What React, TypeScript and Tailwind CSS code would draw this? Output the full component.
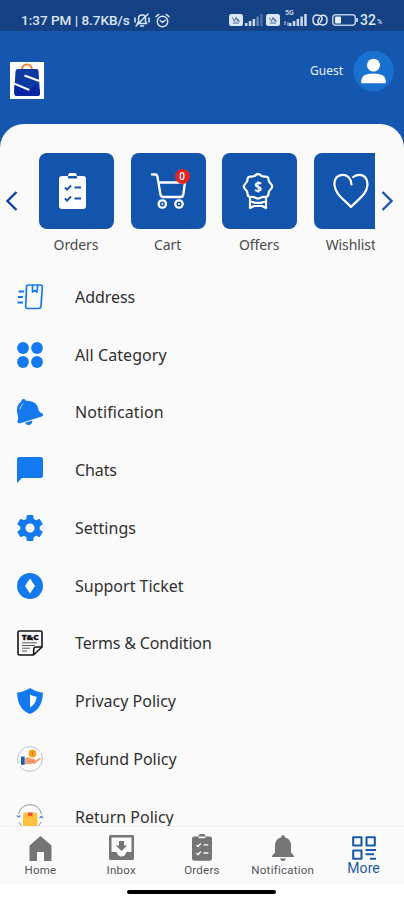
import React from 'react';

const BLUE = '#1479ee';

function Clipboard({ body, mark, className }: { body: string; mark: string; className: string }) {
  return (
    <svg viewBox="0 0 27 36" className={className}>
      <path d="M3 3h6a4.500 4 0 0 1 9 0h6a3 3 0 0 1 3 3v27a3 3 0 0 1-3 3H3a3 3 0 0 1-3-3V6a3 3 0 0 1 3-3Z" fill={body} />
      <path d="M10 4.200h7" stroke={mark} strokeWidth="2.400" strokeLinecap="round" />
      <path d="m6 14.500 2 2.200 4-4.200M6 25.500l2 2.200 4-4.200M15.500 14.500H22M15.500 25.500H22" fill="none" stroke={mark} strokeWidth="1.900" />
    </svg>
  );
}

function CartIcon() {
  return (
    <svg viewBox="0 0 40 40" className="h-10 w-10" fill="none" stroke="#fff" strokeWidth="2.300" strokeLinecap="round" strokeLinejoin="round">
      <path d="M2 3.500h3.500q1.500 0 1.800 1.500l3.200 18.500q.4 2.500 3 2.500h17q2.500 0 2.800-2.500L35 11M8.500 11.500H35" />
      <circle cx="12.300" cy="33" r="3.700" />
      <circle cx="29" cy="33" r="3.700" />
      <path d="M12.300 33h.01M29 33h.01" strokeWidth="2" />
    </svg>
  );
}

function OfferIcon() {
  return (
    <svg viewBox="0 0 32 38" className="h-[38px] w-8" fill="none" stroke="#fff" strokeWidth="2.200" strokeLinejoin="round">
      <path d="M8 4.500Q12 5 13.500 3.200 16 1 18.500 3.200 20 5 24 4.500q2.500.3 2.500 3 0 2.500 2.200 4.200 3 2.800 0 5.600-2.200 1.700-2.200 4.400 0 3.300-3.500 3.300-2.500-.3-4.500.7-2.500 1.400-5 0-2-1-4.500-.7-3.500 0-3.500-3.300 0-2.700-2.200-4.400-3-2.800 0-5.600Q5.500 10 5.500 7.500q0-2.700 2.500-3Z" />
      <path d="M8 25.500V36l4-2h8l4 2V25.500M8 28.800l4.500 2h7l4.500-2" />
      <text x="16" y="19.500" fontSize="13.500" fontWeight="700" textAnchor="middle" fill="#fff" stroke="none" fontFamily="Noto Sans, sans-serif">$</text>
    </svg>
  );
}

function HeartIcon() {
  return (
    <svg viewBox="0 0 36 35" className="h-[35px] w-9" fill="none" stroke="#fff" strokeWidth="2.200" strokeLinejoin="round" strokeLinecap="round">
      <path d="M18.500 11.500C18.500 6 14.500 1.500 9.500 1.800 4 2 1 6 1.500 12c.7 9 9 14 16.500 22C25.500 26 34 21 34.500 12 34.800 6 31.500 2 27 1.800c-3-.1-5 .8-6.800 2.200" />
    </svg>
  );
}

function Tile({ label, children }: { label: string; children: React.ReactNode }) {
  return (
    <div className="flex w-[75px] shrink-0 flex-col items-center">
      <div className="flex h-[75.500px] w-full items-center justify-center rounded-[8px] bg-[#1355ad]">{children}</div>
      <div className="mt-[6px] whitespace-nowrap pr-px font-['Noto_Sans',sans-serif] text-[14px] leading-5 tracking-[-0.1px] text-[#4b4b4b]">{label}</div>
    </div>
  );
}

const rows: { label: string; spacing: string; icon: React.ReactNode }[] = [
  {
    label: 'Address',
    spacing: 'tracking-[-0.05px]',
    icon: (
      <g fill="none" stroke={BLUE} strokeWidth="1.700" strokeLinejoin="round">
        <path d="M11 1h12.500q2 0 1.800 2l-1.300 19q-.2 2.500-2.500 2.500H10.500q-2 0-1.800-2L9.500 3q.1-2 1.500-2ZM15.500 1v7l2.500-1.500L20 8l.7-7" />
        <path d="M1.500 7.500H7M1 13h5M.5 18.500H6" strokeWidth="2" />
      </g>
    ),
  },
  {
    label: 'All Category',
    spacing: 'tracking-[0.08px]',
    icon: (
      <g fill={BLUE}>
        <circle cx="6" cy="6" r="5.900" />
        <circle cx="20" cy="6" r="5.900" />
        <circle cx="6" cy="20" r="5.900" />
        <circle cx="20" cy="20" r="5.900" />
      </g>
    ),
  },
  {
    label: 'Notification',
    spacing: 'tracking-[0.1px]',
    icon: (
      <g>
        <path d="M4.200 2.800C4-.8 8.200-.8 8.800 1.800 16 1.200 21 5 21.500 10.800c.2 2 2.300 2.800 4 4 1.200 1 .8 2.400-.6 2.800L3.200 24.200C1 24.800 0 23.500.6 21.800c.8-2.300.6-4 0-6.300C-.8 10 .2 5.500 4.200 2.800Z" fill={BLUE} />
        <path d="m8 23.800 7.500-2.300q-.8 4.700-4.300 4.500Q9 26 8 23.800Z" fill={BLUE} />
        <path d="M3 10Q3.300 6.500 6 5" stroke="#b9dafc" strokeWidth="1" fill="none" strokeLinecap="round" />
      </g>
    ),
  },
  {
    label: 'Chats',
    spacing: 'tracking-[-0.1px]',
    icon: <path d="M2.500 0h21Q26 0 26 2.500v16q0 2.500-2.500 2.500H5l-5 5V2.500Q0 0 2.500 0Z" fill={BLUE} />,
  },
  {
    label: 'Settings',
    spacing: 'tracking-[0px]',
    icon: (
      <path
        fill={BLUE}
        transform="translate(-2.6 -2.6) scale(1.3)"
        d="M19.430 12.980c.04-.32.07-.64.07-.98s-.03-.66-.07-.98l2.110-1.650c.19-.15.24-.42.12-.64l-2-3.460c-.12-.22-.39-.3-.61-.22l-2.490 1c-.52-.4-1.080-.73-1.690-.98l-.38-2.650C14.460 2.180 14.250 2 14 2h-4c-.25 0-.46.18-.49.42l-.38 2.650c-.61.25-1.170.59-1.690.98l-2.490-1c-.23-.09-.49 0-.61.22l-2 3.460c-.13.22-.07.49.12.64l2.110 1.650c-.04.32-.07.65-.07.98s.03.66.07.98l-2.110 1.650c-.19.15-.24.42-.12.64l2 3.460c.12.22.39.3.61.22l2.490-1c.52.4 1.080.73 1.690.98l.38 2.650c.03.24.24.42.49.42h4c.25 0 .46-.18.49-.42l.38-2.650c.61-.25 1.170-.59 1.690-.98l2.490 1c.23.09.49 0 .61-.22l2-3.460c.12-.22.07-.49-.12-.64l-2.110-1.650zM12 15.500c-1.930 0-3.500-1.570-3.500-3.500s1.570-3.500 3.500-3.500 3.500 1.570 3.500 3.500-1.570 3.500-3.500 3.500z"
      />
    ),
  },
  {
    label: 'Support Ticket',
    spacing: 'tracking-[0px]',
    icon: (
      <g>
        <circle cx="13" cy="13" r="13" fill={BLUE} />
        <path d="m13 5.500 5 7.500-5 7.500L8 13Z" fill="#fff" />
      </g>
    ),
  },
  {
    label: 'Terms & Condition',
    spacing: 'tracking-[-0.15px]',
    icon: (
      <g fill="none" stroke="#171717" strokeWidth="1.600" strokeLinejoin="round">
        <path d="M2.500 1h21q1.500 0 1.500 1.500V17l-8.500 8h-14Q1 25 1 23.500v-21Q1 1 2.500 1ZM25 17h-6q-2 0-2.200 2l-.3 6" />
        <path d="M5 12.800h15M5 15.500h13M5 18.200h8M5 21h5" strokeWidth="1" stroke="#555" />
        <text x="13.200" y="10" fontSize="7.600" fontWeight="900" textAnchor="middle" fill="#111" stroke="#111" strokeWidth=".3" fontFamily="Noto Sans, sans-serif" textLength="17" lengthAdjust="spacingAndGlyphs">T&amp;C</text>
      </g>
    ),
  },
  {
    label: 'Privacy Policy',
    spacing: 'tracking-[0px]',
    icon: (
      <g>
        <path d="M13 0q5 3.500 13 4.700C25.500 16 21 23 13 26 5 23 .5 16 0 4.700 8 3.500 13 0 13 0Z" fill={BLUE} />
        <path d="M13 6.500q3 1.800 6.700 2.300Q19 16 13 19.500Z" fill="#fff" />
      </g>
    ),
  },
  {
    label: 'Refund Policy',
    spacing: 'tracking-[0px]',
    icon: (
      <g>
        <circle cx="13" cy="13" r="12.300" fill="#fff" stroke="#b8c2cd" strokeWidth="1" strokeDasharray="31 3 35 2" />
        <circle cx="15.500" cy="7.500" r="3.900" fill="#f7a51d" />
        <path d="M15.500 5.500v4" stroke="#d57b0e" strokeWidth="1.200" />
        <path d="M8 12.500q3-2.500 6 0l3 .3q1.500.7.500 2l5-2.800q2-.4 1.200 1.300L18 17.800l-10 .4Z" fill="#f4a36e" />
        <path d="M11.500 15.300h5.500" stroke="#cf7645" strokeWidth=".8" />
        <path d="M4 10.500h3.700v8.300H4Z" fill="#1263b0" />
      </g>
    ),
  },
  {
    label: 'Return Policy',
    spacing: 'tracking-[0px]',
    icon: (
      <g>
        <path d="M1.500 10Q4 .7 13 .7T24.500 10M24 18q-3 7.300-11 7.300T2 18" fill="none" stroke="#8997a6" strokeWidth="1" />
        <path d="m0 11.500 1.700 1.500L3.300 11.500M22.500 14l1.800-1.700L26 14" fill="none" stroke="#437db9" strokeWidth="1.100" />
        <rect x="6" y="8.500" width="14.500" height="14.500" rx="2" fill="#ffc23f" />
        <path d="M11 8.500h4.500v4.200l-2.200-1.200-2.300 1.200Z" fill="#e8523c" />
      </g>
    ),
  },
];

function SimIcon() {
  return (
    <svg viewBox="0 0 14 12" className="h-3 w-3.5">
      <rect width="14" height="12" rx="2.500" fill="#dce7f5" />
      <path d="m3.500 3.500 2 4 1.500-4 2 4M8.500 4.500l2 3.500M4 9h6" stroke="#456a9d" strokeWidth="1" fill="none" />
    </svg>
  );
}

function Bars({ faded }: { faded: boolean }) {
  return (
    <svg viewBox="0 0 18 12" className="h-3 w-[18px]" fill="#cbdaf0">
      <rect x="0" y="9" width="2.500" height="3" />
      <rect x="3.800" y="7" width="2.500" height="5" />
      <rect x="7.600" y="5" width="2.500" height="7" />
      <rect x="11.400" y="2.500" width="2.500" height="9.500" opacity={faded ? 0.45 : 1} />
      <rect x="15.200" y="0" width="2.500" height="12" opacity={faded ? 0.3 : 1} />
    </svg>
  );
}

function StatusBar() {
  return (
    <div className="flex h-[31px] items-center bg-[#134184] pl-[21px] pt-[9px] font-[Roboto,sans-serif] text-[13.500px] font-medium text-[#dce7f5]">
      <span className="w-[110px] whitespace-nowrap">1:37 PM | 8.7KB/s</span>
      <svg viewBox="0 0 16 16" className="ml-[3px] h-4 w-4" fill="none" stroke="#dce7f5" strokeWidth="1.500" strokeLinecap="round">
        <path d="M3.500 11.500h9l-1-2V6.500q0-3.500-3.500-3.500T4.500 6.500v3ZM6.500 14h3M2 14 14 2M1 6v4M15 6v4" />
      </svg>
      <svg viewBox="0 0 16 16" className="ml-[5px] h-[15px] w-[15px]" fill="none" stroke="#dce7f5" strokeWidth="1.500" strokeLinecap="round">
        <circle cx="8" cy="9" r="5.600" />
        <path d="m1 4 3-2.500M15 4l-3-2.500M5.500 8 8 10l3-2.300" />
      </svg>
      <div className="ml-[59px] flex items-center">
        <SimIcon />
        <div className="ml-[2px]"><Bars faded /></div>
        <div className="ml-[3px]"><SimIcon /></div>
        <div className="relative ml-[4px] w-[24px]">
          <span className="absolute -top-[4px] left-[1px] text-[7px] leading-[7px]">5G</span>
          <div className="flex items-end">
            <svg viewBox="0 0 5 5" className="h-[5px] w-[5px]" fill="none" stroke="#cbdaf0"><path d="M1 0v4M4 1v4" /></svg>
            <Bars faded={false} />
          </div>
        </div>
        <svg viewBox="0 0 16 12" className="ml-[4px] h-3 w-4" fill="none" stroke="#dce7f5" strokeWidth="1.500" strokeLinecap="round">
          <path d="M6.500 10.500Q1 11.500 1 6t5-4.800Q10.500 1.500 10 5.500L8.500 8M9.500 1.500Q15 .5 15 6t-5 4.800Q5.500 10.500 6 6.500L7.500 4" />
        </svg>
        <svg viewBox="0 0 27 12" className="ml-[4px] h-3 w-[27px]">
          <rect x=".8" y=".8" width="22.500" height="10.400" rx="3" fill="none" stroke="#b9cae4" strokeWidth="1.500" />
          <rect x="3" y="2.500" width="6" height="7" rx="1" fill="#e8eff9" />
          <path d="M25 4v4" stroke="#b9cae4" strokeWidth="2" />
        </svg>
        <span className="ml-px text-[14px]">32</span>
        <span className="ml-px pt-1 text-[7px]">%</span>
      </div>
    </div>
  );
}

function Header() {
  return (
    <div className="flex h-[93px] justify-between bg-[#1557ae] pl-[10px] pr-[10px]">
      <svg viewBox="0 0 34 37" className="mt-[31px] h-[37px] w-[34px]">
        <rect width="34" height="37" fill="#fff" />
        <path d="M12 8.500Q12 2.500 17 2.500T22 8.500" fill="none" stroke="#ed8749" strokeWidth="2.200" />
        <path d="M8 7h18.500q2 0 2 2L30 31q0 3-2.300 3H7Q4 34 4.200 31L5.500 9.500Q5.700 7 8 7Z" fill="#0c3aa0" />
        <path d="M4.300 28 4.500 23l14 6L26 22l3.700 6 .3 3q0 3-2.300 3H7Q4 34 4.300 28Z" fill="#0824a2" />
        <path d="M14.500 13.500 29.300 19M4.300 21.700l15 6.300" fill="none" stroke="#fff" strokeWidth="1.900" />
      </svg>
      <div className="flex h-[79px] items-center">
        <span className="mr-[10px] font-['Noto_Sans',sans-serif] text-[12px] leading-4 text-[#e7f0fb]">Guest</span>
        <svg viewBox="0 0 42 42" className="h-[42px] w-[41px]">
          <circle cx="21" cy="21" r="20.800" fill="#1871cf" />
          <circle cx="21" cy="15" r="6.600" fill="#fff" />
          <path d="M8.500 33.500v-3q0-7 12.500-7t12.500 7v3Z" fill="#fff" />
        </svg>
      </div>
    </div>
  );
}

function NavItem({ label, children, active }: { label: string; children: React.ReactNode; active?: boolean }) {
  return (
    <div className="flex flex-1 flex-col items-center font-[Roboto,sans-serif]">
      <div className="flex h-[35px] items-end justify-center">{children}</div>
      {active ? (
        <span className="-mt-[2px] text-[14px] leading-4 tracking-[0.1px] text-[#1c59a8]">{label}</span>
      ) : (
        <span className="whitespace-nowrap text-[11.500px] leading-4 tracking-[0.25px] text-[#555]">{label}</span>
      )}
    </div>
  );
}

export default function App() {
  return (
    <div className="flex h-[900px] w-[404px] flex-col overflow-hidden bg-white">
      <StatusBar />
      <Header />
      <div className="h-[702px] shrink-0 bg-[#1557ae]">
        <div className="flex h-full flex-col overflow-hidden rounded-t-[24px] bg-[#fafafa]">
          <div className="flex h-[144px] shrink-0 pt-[29px]">
            <svg viewBox="0 0 12 20" className="ml-[6px] mr-[21px] mt-[38px] h-5 w-3 shrink-0" fill="none" stroke="#123f9c" strokeWidth="2.300">
              <path d="M10.500 1 1.500 10l9 9" />
            </svg>
            <div className="flex w-[336px] shrink-0 gap-[16.600px] overflow-hidden">
              <Tile label="Orders">
                <Clipboard body="#fff" mark="#1355ad" className="mr-[9px] h-[36px] w-[27px]" />
              </Tile>
              <Tile label="Cart">
                <div className="relative ml-[3px]">
                  <CartIcon />
                  <span className="absolute -top-[2px] left-[25px] flex h-[15px] w-[15px] items-center justify-center rounded-full bg-[#e0241f] font-[Roboto,sans-serif] text-[10px] font-medium text-white">0</span>
                </div>
              </Tile>
              <Tile label="Offers"><div className="mr-1"><OfferIcon /></div></Tile>
              <Tile label="Wishlist"><HeartIcon /></Tile>
            </div>
            <svg viewBox="0 0 12 20" className="ml-[6px] mt-[38px] h-5 w-3 shrink-0" fill="none" stroke="#1757ac" strokeWidth="2.300">
              <path d="m1.500 1 9 9-9 9" />
            </svg>
          </div>
          {rows.map((r) => (
            <div key={r.label} className="flex h-[57.750px] shrink-0 items-center pl-[17px]">
              <svg viewBox="0 0 26 26" className="h-[26px] w-[26px] overflow-visible">{r.icon}</svg>
              <span className={`ml-[32px] whitespace-nowrap font-['Noto_Sans',sans-serif] text-[16px] leading-6 text-[#303030] ${r.spacing}`}>{r.label}</span>
            </div>
          ))}
        </div>
      </div>
      <div className="flex h-[58px] shrink-0 border-t border-[#f0f0f0] bg-[#fafafa]">
        <NavItem label="Home">
          <svg viewBox="0 0 22 26" className="mb-px h-[26px] w-[23px]" fill="#757575"><path d="M11 1 0 10.500V26h7.500v-9h7v9H22V10.500Z" /></svg>
        </NavItem>
        <NavItem label="Inbox">
          <svg viewBox="0 0 25 25" className="mb-[2px] h-[25px] w-[25px]">
            <path fillRule="evenodd" fill="#757575" d="M1.500 0h22Q25 0 25 1.500v22q0 1.500-1.500 1.500h-22Q0 25 0 23.500v-22Q0 0 1.500 0ZM2.500 2.500V17h5q1.500 4.500 5 4.500t5-4.500h5V2.500Z" />
            <path d="M10 6h5v4.500h3.200L12.500 16l-5.700-5.500H10Z" fill="#757575" />
          </svg>
        </NavItem>
        <NavItem label="Orders"><Clipboard body="#757575" mark="#fafafa" className="mb-px h-[27px] w-[20px]" /></NavItem>
        <NavItem label="Notification">
          <svg viewBox="0 0 22 26" className="mb-px h-[26px] w-[22px]" fill="#757575"><path d="M11 0q2 0 2 2.500 6 1.500 6 8v7l3 3.500v1H0v-1l3-3.500v-7q0-6.500 6-8Q9 0 11 0ZM8 23.500h6q-.5 2.500-3 2.500t-3-2.500Z" /></svg>
        </NavItem>
        <NavItem label="More" active>
          <svg viewBox="0 0 24 24" className="mb-[2px] h-[24px] w-[24px]" fill="none" stroke="#1c59a8" strokeWidth="2.100" strokeLinejoin="round">
            <path d="M1.200 1.200h8.300v8.300H1.200ZM14.500 1.200h8.300v8.300h-8.300ZM1.200 14.500h8.300v8.300H1.200ZM13.500 14H24M13.500 18.300H22M18 22.700h6" />
          </svg>
        </NavItem>
      </div>
      <div className="flex h-4 shrink-0 justify-center pr-0.5 pt-[6px]">
        <div className="h-1 w-[149px] rounded-full bg-black" />
      </div>
    </div>
  );
}
